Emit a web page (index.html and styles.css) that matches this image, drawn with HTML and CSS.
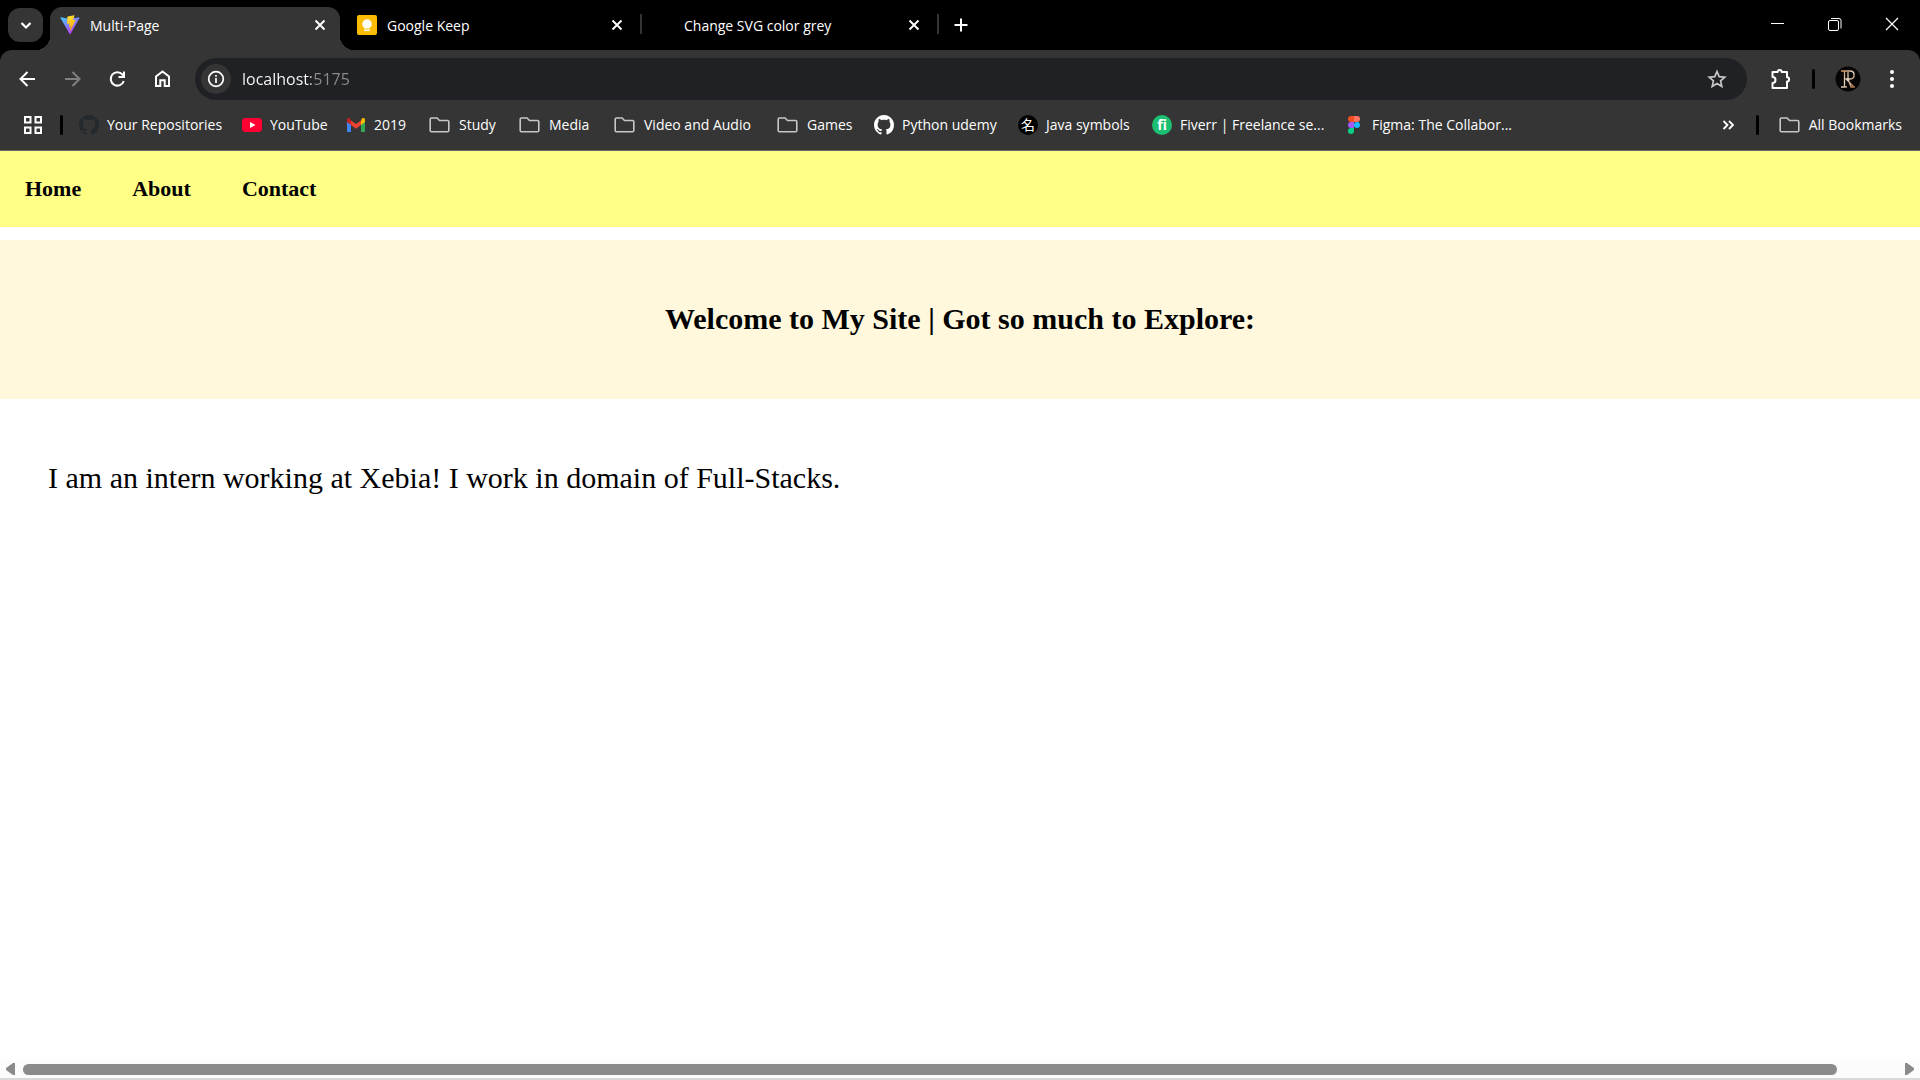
FILE: index.html
```
<!DOCTYPE html>
<html lang="en">
<head>
<meta charset="utf-8">
<title>Multi-Page</title>
<link rel="stylesheet" href="styles.css">
</head>
<body>
<svg class="defs" aria-hidden="true">
  <defs>
    <linearGradient id="vite-a" x1="0" y1="0" x2="0.6" y2="1"><stop offset="0" stop-color="#41d1ff"/><stop offset="1" stop-color="#bd34fe"/></linearGradient>
    <linearGradient id="vite-b" x1="0" y1="0" x2="0.2" y2="1"><stop offset="0" stop-color="#ffea83"/><stop offset="0.1" stop-color="#ffdd35"/><stop offset="1" stop-color="#ffa800"/></linearGradient>
    <linearGradient id="gold" x1="0" y1="0" x2="1" y2="1"><stop offset="0" stop-color="#c98a55"/><stop offset="0.5" stop-color="#e6d8c4"/><stop offset="1" stop-color="#a5663a"/></linearGradient>
    <symbol id="folder" viewBox="0 0 22 20"><path d="M2.500 3h5.600l2.400 2.500h8a1.300 1.300 0 0 1 1.300 1.300v8.600a1.300 1.300 0 0 1-1.300 1.300h-16a1.300 1.300 0 0 1-1.300-1.300V4.300A1.300 1.300 0 0 1 2.500 3z" fill="none" stroke="#c7c7c7" stroke-width="1.600"/></symbol>
    <symbol id="github" viewBox="0 0 16 16"><path d="M8 0C3.580 0 0 3.580 0 8c0 3.540 2.290 6.530 5.470 7.590.4.070.550-.170.550-.380 0-.190-.010-.820-.010-1.490-2.010.370-2.530-.490-2.690-.940-.090-.230-.480-.940-.820-1.130-.280-.150-.680-.520-.010-.530.630-.010 1.080.580 1.230.820.720 1.210 1.870.870 2.330.660.070-.520.280-.870.510-1.070-1.780-.200-3.640-.890-3.640-3.950 0-.870.310-1.590.820-2.150-.080-.200-.360-1.020.080-2.120 0 0 .670-.210 2.200.820.640-.180 1.320-.270 2-.270s1.360.090 2 .270c1.530-1.040 2.200-.820 2.200-.820.440 1.100.160 1.920.080 2.120.510.560.820 1.270.820 2.150 0 3.070-1.870 3.750-3.650 3.950.290.250.540.730.540 1.480 0 1.070-.010 1.930-.010 2.200 0 .210.150.460.550.380A8.010 8.010 0 0 0 16 8c0-4.420-3.580-8-8-8z" fill="currentColor"/></symbol>
    <symbol id="cross" viewBox="0 0 20 20"><path d="M5.500 5.500l9 9M14.500 5.500l-9 9" stroke="#fff" stroke-width="1.900" fill="none"/></symbol>
  </defs>
</svg>
<header class="browser">
  <div class="tabstrip">
    <button class="tab-search" aria-label="Search tabs"><svg width="20" height="20" viewBox="0 0 20 20"><path d="M5.500 8l4.500 4.500L14.500 8" fill="none" stroke="#fff" stroke-width="2.200"/></svg></button>
    <ul class="tabs">
      <li class="tab tab-active">
        <svg class="favicon" viewBox="0 0 410 404"><path d="M400 59L216 388c-4 7-15 7-18 0L10 59c-4-7 2-16 10-14l185 33 181-33c8-1 14 7 10 14z" fill="url(#vite-a)"/><path d="M293 2L157 28c-3 0-4 2-4 5l-9 141c0 4 3 6 6 5l38-9c4-1 7 3 6 6l-11 56c-1 3 2 6 6 5l23-7c4-1 7 2 6 6l-18 87c-1 5 6 8 9 4l2-4 111-221c2-3-1-8-5-7l-39 8c-4 0-7-3-6-7l26-87c1-4-2-8-5-7z" fill="url(#vite-b)"/></svg>
        <span class="tab-title">Multi-Page</span>
        <button class="icon-button" aria-label="Close Multi-Page"><svg width="20" height="20"><use href="#cross"/></svg></button>
      </li>
      <li class="tab">
        <svg class="favicon" viewBox="0 0 20 20"><rect width="20" height="20" rx="2" fill="#fbbc04"/><path d="M10 4.200a4.800 4.800 0 0 0-2.800 8.600V13.500h5.600v-.7A4.800 4.800 0 0 0 10 4.200z" fill="#fff"/><path d="M7.200 14.500h5.600v1.600H7.200z" fill="#fff"/></svg>
        <span class="tab-title">Google Keep</span>
        <button class="icon-button" aria-label="Close Google Keep"><svg width="20" height="20"><use href="#cross"/></svg></button>
      </li>
      <li class="tab">
        <span class="favicon"></span>
        <span class="tab-title">Change SVG color grey</span>
        <button class="icon-button" aria-label="Close Change SVG color grey"><svg width="20" height="20"><use href="#cross"/></svg></button>
      </li>
    </ul>
    <button class="icon-button new-tab" aria-label="New tab"><svg width="20" height="20" viewBox="0 0 20 20"><path d="M10 3.500v13M3.500 10h13" stroke="#fff" stroke-width="2"/></svg></button>
    <div class="window-controls">
      <button aria-label="Minimize"><svg width="16" height="16"><path d="M1 7.500h13" stroke="#fff"/></svg></button>
      <button aria-label="Restore"><svg width="16" height="16" fill="none" stroke="#fff"><rect x="1.500" y="4.500" width="10" height="10" rx="1.500"/><path d="M4 2.500h8a2 2 0 0 1 2 2v8"/></svg></button>
      <button aria-label="Close window"><svg width="16" height="16"><path d="M2 2l12 12M14 2L2 14" stroke="#fff" stroke-width="1.200"/></svg></button>
    </div>
  </div>
  <div class="toolbar">
    <div class="nav-buttons">
      <button class="icon-button" aria-label="Back"><svg width="20" height="20" fill="none" stroke="#fff" stroke-width="2"><path d="M17 10H3.500M9.500 3L2.500 10l7 7"/></svg></button>
      <button class="icon-button" aria-label="Forward"><svg width="20" height="20" fill="none" stroke="#808080" stroke-width="2"><path d="M2 10h14M9.500 3l7 7-7 7"/></svg></button>
      <button class="icon-button" aria-label="Reload"><svg width="20" height="20" fill="none" stroke="#fff" stroke-width="2"><path d="M15.800 12A6.700 6.700 0 1 1 14.500 5.500L16 7.500"/><path d="M16 2.500V8h-5.500"/></svg></button>
      <button class="icon-button" aria-label="Home"><svg width="20" height="20" fill="none" stroke="#fff" stroke-width="2"><path d="M3 17V7.500L9.500 2.500 16 7.500V17h-4.300v-5.800H7.300V17z"/></svg></button>
    </div>
    <form class="omnibox">
      <button type="button" class="site-info" aria-label="View site information"><svg width="20" height="20" fill="none" stroke="#fff" stroke-width="1.700"><circle cx="10" cy="10" r="7.300"/><path d="M10 9v5M10 6v1.800"/></svg></button>
      <input class="address" type="text" aria-label="Address" value="localhost:5175">
      <button type="button" class="icon-button" aria-label="Bookmark this page"><svg width="20" height="20" fill="none" stroke="#c7c7c7" stroke-width="1.700"><path d="M10 2.500l2.200 5.200 5.600.5-4.200 3.700 1.200 5.500L10 14.500l-4.800 2.900 1.200-5.500-4.200-3.700 5.600-.5z"/></svg></button>
    </form>
    <div class="actions">
      <button class="icon-button" aria-label="Extensions"><svg width="22" height="22" fill="none" stroke="#fff" stroke-width="2"><path d="M2.500 4h5.200a2 2 0 0 1 4 0H17v5.300a2 2 0 0 1 0 4.200V20H2.500v-5a3 3 0 0 0 0-6z" stroke-linejoin="round"/></svg></button>
      <span class="divider"></span>
      <button class="icon-button" aria-label="Profile"><svg width="26" height="26" viewBox="0 0 26 26"><circle cx="13" cy="13" r="12.500" fill="#050505"/><path d="M6 5h9c5.500 0 5.500 8 0 8h-4l8 8M9.500 5v16M6 21h6M13 13l3 8h4M13 6v7" fill="none" stroke="url(#gold)" stroke-width="1.300"/></svg></button>
      <button class="icon-button" aria-label="Menu"><svg width="20" height="20" fill="#fff"><circle cx="10" cy="3" r="2"/><circle cx="10" cy="10" r="2"/><circle cx="10" cy="17" r="2"/></svg></button>
    </div>
  </div>
  <nav class="bookmarks" aria-label="Bookmarks">
    <button class="icon-button" aria-label="Apps"><svg width="20" height="20" fill="none" stroke="#fff" stroke-width="2"><path d="M2 2h5.500v5.500H2zM12.500 2H18v5.500h-5.500zM2 12.500h5.500V18H2zM12.500 12.500H18V18h-5.500z"/></svg></button>
    <span class="divider"></span>
    <ul class="bookmark-list">
      <li><a class="bookmark" href="#"><svg class="favicon favicon-dark"><use href="#github"/></svg>Your Repositories</a></li>
      <li><a class="bookmark" href="#"><svg class="favicon" viewBox="0 0 20 20"><rect y="3" width="20" height="14" rx="3.500" fill="#ff0033"/><path d="M8 7l5.500 3L8 13z" fill="#fff"/></svg>YouTube</a></li>
      <li><a class="bookmark" href="#"><svg class="favicon" viewBox="0 0 20 20"><path d="M1 5v11a1 1 0 0 0 1 1h3V8z" fill="#4285f4"/><path d="M19 5v11a1 1 0 0 1-1 1h-3V8z" fill="#34a853"/><path d="M15 5.500V10l4-3V5c0-2-2-2.500-3-1.500z" fill="#fbbc04"/><path d="M5 10V5.500l5 3.500 5-3.500V10l-5 3.700z" fill="#ea4335"/><path d="M1 5v2l4 3V5.500L4 3.500C3 2.500 1 3 1 5z" fill="#c5221f"/></svg>2019</a></li>
      <li><a class="bookmark" href="#"><svg class="folder"><use href="#folder"/></svg>Study</a></li>
      <li><a class="bookmark" href="#"><svg class="folder"><use href="#folder"/></svg>Media</a></li>
      <li><a class="bookmark" href="#"><svg class="folder"><use href="#folder"/></svg>Video and Audio</a></li>
      <li><a class="bookmark" href="#"><svg class="folder"><use href="#folder"/></svg>Games</a></li>
      <li><a class="bookmark" href="#"><svg class="favicon"><use href="#github"/></svg>Python udemy</a></li>
      <li><a class="bookmark" href="#"><span class="favicon favicon-java">名</span>Java symbols</a></li>
      <li><a class="bookmark" href="#"><span class="favicon favicon-fiverr">fi</span>Fiverr | Freelance se...</a></li>
      <li><a class="bookmark" href="#"><svg class="favicon" viewBox="0 0 20 20"><path d="M10 1H7a3 3 0 0 0 0 6h3z" fill="#f24e1e"/><path d="M10 1h3a3 3 0 0 1 0 6h-3z" fill="#ff7262"/><path d="M10 7H7a3 3 0 0 0 0 6h3z" fill="#a259ff"/><circle cx="13" cy="10" r="3" fill="#1abcfe"/><path d="M7 13h3v3a3 3 0 1 1-3-3z" fill="#0acf83"/></svg>Figma: The Collabor...</a></li>
    </ul>
    <button class="icon-button" aria-label="More bookmarks"><svg width="20" height="20" fill="none" stroke="#fff" stroke-width="1.800"><path d="M4.500 6L8.500 10l-4 4M10 6l4 4-4 4"/></svg></button>
    <span class="divider"></span>
    <a class="bookmark" href="#"><svg class="folder"><use href="#folder"/></svg>All Bookmarks</a>
  </nav>
</header>
<div class="page">
  <nav class="site-nav" aria-label="Site">
    <a href="#">Home</a>
    <a href="#">About</a>
    <a href="#">Contact</a>
  </nav>
  <main>
    <h1 class="banner">Welcome to My Site | Got so much to Explore:</h1>
    <p class="intro">I am an intern working at Xebia! I work in domain of Full-Stacks.</p>
  </main>
</div>
<div class="scrollbar" aria-hidden="true">
  <svg width="10" height="12" fill="#8b8b8b"><path d="M9 0v12H7L0 7V5l7-5z"/></svg>
  <div class="track"><div class="thumb"></div></div>
  <svg width="10" height="12" fill="#8b8b8b"><path d="M0 0v12h2l7-5V5L2 0z"/></svg>
</div>
</body>
</html>
```
FILE: styles.css
```
* {
  box-sizing: border-box;
}

body {
  display: flex;
  flex-direction: column;
  min-height: 100vh;
  margin: 0;
  background: #fff;
  color: #000;
  font-family: "Liberation Serif", "Times New Roman", serif;
}

.defs {
  position: absolute;
  width: 0;
  height: 0;
}

svg {
  display: block;
  flex: none;
}

button {
  display: flex;
  align-items: center;
  justify-content: center;
  padding: 0;
  border: 0;
  background: none;
  flex: none;
}

ul {
  display: flex;
  margin: 0;
  padding: 0;
  list-style: none;
}

/* Browser window */

.browser {
  background: #000;
  color: #fff;
  border-bottom: 1px solid #6b6766;
  font: 14px/20px "Open Sans", "Noto Sans CJK JP", sans-serif;
}

.tabstrip {
  display: flex;
  height: 50px;
  padding-left: 8px;
}

.tab-search {
  width: 35px;
  height: 34px;
  margin: 8px 7px 0 0;
  border-radius: 12px;
  background: #353535;
}

.tabs {
  gap: 7px;
}

.tab {
  position: relative;
  display: flex;
  align-items: center;
  width: 290px;
  height: 43px;
  margin-top: 7px;
  padding: 0 10px 7px;
}

.tab-active {
  border-radius: 12px 12px 0 0;
  background: #353535;
}

.tab-active::before,
.tab-active::after {
  content: "";
  position: absolute;
  bottom: 0;
  width: 14px;
  height: 14px;
}

.tab-active::before {
  right: 100%;
  background: radial-gradient(circle at 0 0, transparent 14px, #353535 14px);
}

.tab-active::after {
  left: 100%;
  background: radial-gradient(circle at 100% 0, transparent 14px, #353535 14px);
}

.tab:not(.tab-active)::after {
  content: "";
  position: absolute;
  top: 7px;
  right: -5px;
  width: 2px;
  height: 20px;
  background: #353535;
}

.tab-title {
  flex: 1;
  margin-left: 10px;
  padding-top: 2px;
}

.favicon {
  flex: none;
  width: 20px;
  height: 20px;
}

.icon-button {
  min-width: 20px;
  height: 20px;
}

.new-tab {
  margin: 15px 0 0 17px;
}

.window-controls {
  display: flex;
  margin-left: auto;
}

.window-controls button {
  width: 57px;
  height: 48px;
}

.toolbar {
  display: flex;
  align-items: center;
  height: 58px;
  padding: 0 18px;
  border-radius: 12px 12px 0 0;
  background: #353535;
}

.nav-buttons {
  display: flex;
  gap: 25px;
}

.omnibox {
  display: flex;
  align-items: center;
  flex: 1;
  height: 42px;
  margin: 0 23px 0 22px;
  padding: 0 20px 0 6px;
  border-radius: 21px;
  background: #202124;
}

.site-info {
  width: 30px;
  height: 30px;
  border-radius: 50%;
  background: #353535;
}

.address {
  flex: 1;
  margin-left: 11px;
  padding: 0;
  border: 0;
  outline: 0;
  background: linear-gradient(90deg, #fff 69px, #8c8c8c 69px);
  background-clip: text;
  -webkit-background-clip: text;
  -webkit-text-fill-color: transparent;
  font: 16px/24px "Open Sans", sans-serif;
}

.actions {
  display: flex;
  align-items: center;
}

.divider {
  width: 3px;
  height: 20px;
  border-radius: 2px;
  background: #000;
}

.actions .divider {
  margin: 0 20px;
}

.actions [aria-label="Menu"] {
  margin-left: 21px;
}

.bookmarks {
  display: flex;
  align-items: center;
  height: 42px;
  padding: 0 18px 8px 23px;
  background: #353535;
}

.bookmarks > .divider {
  margin: 0 20px 0 17px;
}

.bookmark-list {
  display: grid;
  flex: 1;
  grid-template-columns: 163px 104px 83px 90px 95px 163px 97px 144px 134px 192px auto;
  margin-left: -4px;
}

.bookmark {
  display: flex;
  align-items: center;
  gap: 8px;
  color: #fff;
  text-decoration: none;
  white-space: nowrap;
}

.folder {
  width: 22px;
  height: 20px;
}

.favicon-dark {
  color: #24292e;
}

.favicon-java,
.favicon-fiverr {
  border-radius: 50%;
  font-size: 14px;
  text-align: center;
}

.favicon-java {
  background: #000;
}

.favicon-fiverr {
  background: #1dbf73;
  font-weight: 700;
}

/* Site */

.page {
  flex: 1;
}

.site-nav {
  display: flex;
  gap: 51px;
  padding: 25px;
  background: #ffff85;
  font-size: 22px;
  font-weight: 700;
  line-height: 26px;
}

.site-nav a {
  color: #000;
  text-decoration: none;
}

.banner {
  margin: 13px 0 0;
  padding: 62px 25px 63px;
  background: cornsilk;
  font-size: 30px;
  line-height: 34px;
  text-align: center;
}

.intro {
  margin: 0;
  padding: 62px 48px;
  font-size: 30px;
  line-height: 34px;
}

.scrollbar {
  display: flex;
  align-items: center;
  height: 20px;
  padding: 0 5px 0 6px;
  border-bottom: 2px solid #d9d9d9;
  background: #fcfcfc;
}

.track {
  flex: 1;
  padding: 0 68px 0 7px;
}

.thumb {
  height: 11px;
  border-radius: 6px;
  background: #8b8b8b;
}
```
